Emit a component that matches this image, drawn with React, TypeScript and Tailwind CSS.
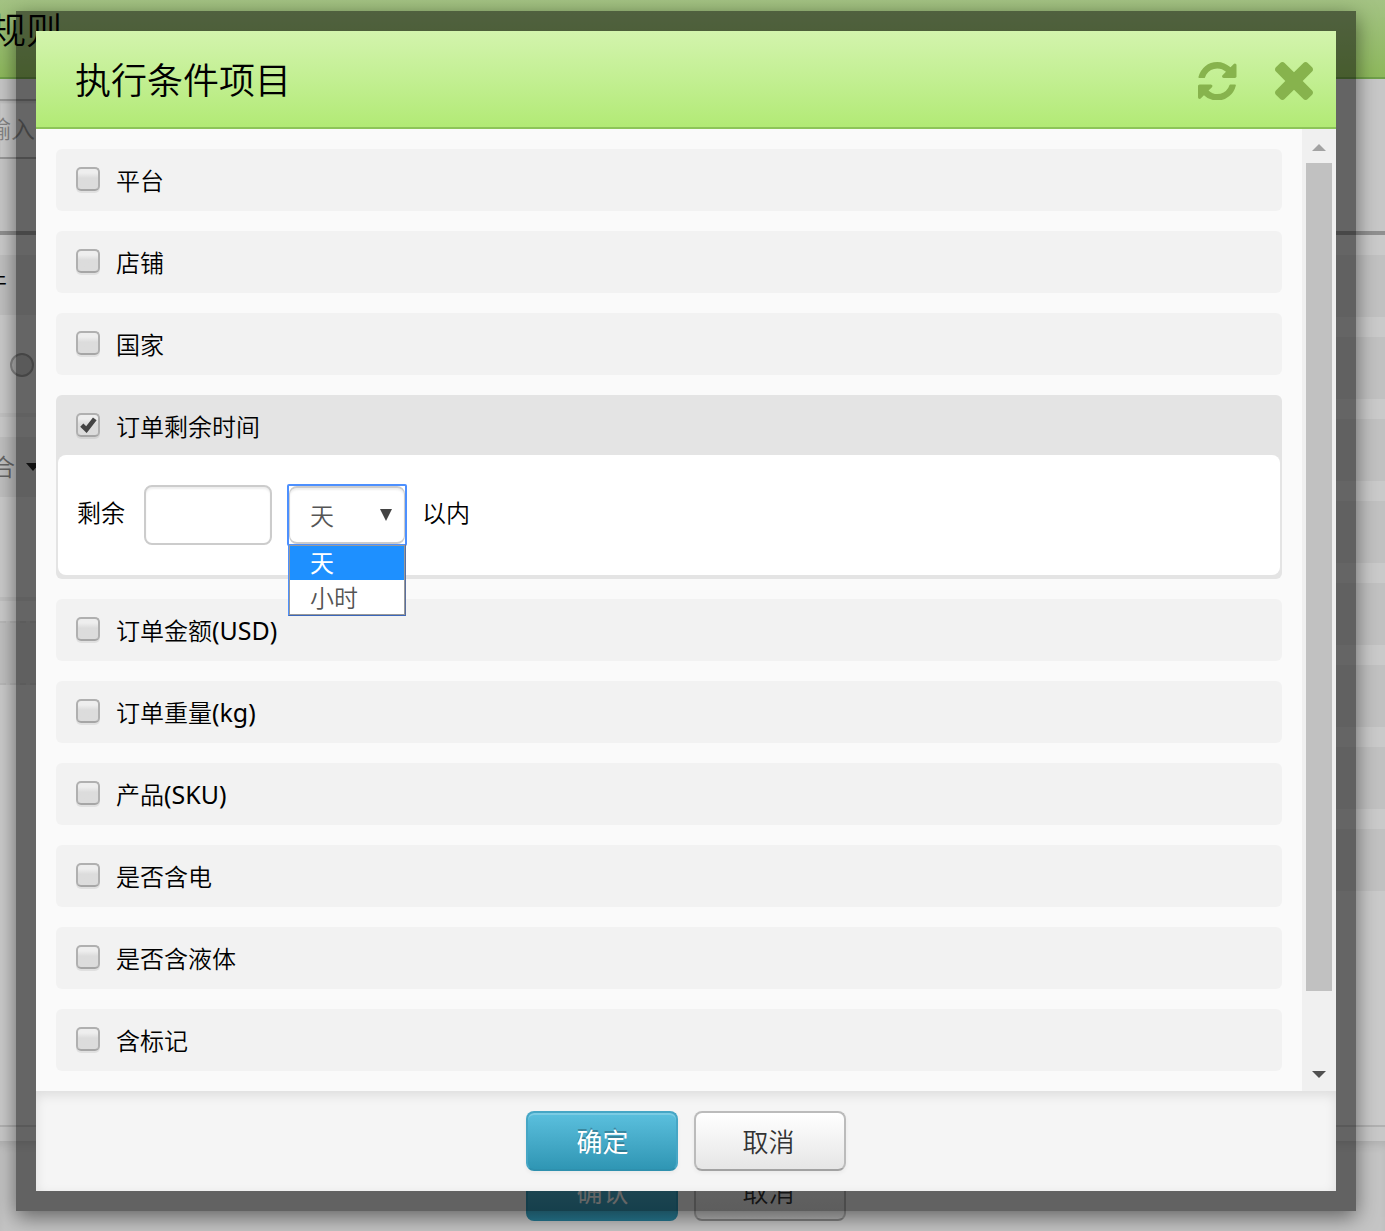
import { useState } from "react"
import clsx from "clsx"

const conditions = [
  { id: "platform", label: "平台" },
  { id: "shop", label: "店铺" },
  { id: "country", label: "国家" },
  { id: "timeLeft", label: "订单剩余时间" },
  { id: "amount", label: "订单金额", suffix: "(USD)" },
  { id: "weight", label: "订单重量", suffix: "(kg)" },
  { id: "sku", label: "产品", suffix: "(SKU)" },
  { id: "battery", label: "是否含电" },
  { id: "liquid", label: "是否含液体" },
  { id: "tag", label: "含标记" },
]

const units = ["天", "小时"]

function RefreshIcon() {
  return (
    <svg viewBox="128 128 1536 1536" className="size-[38.5px]" fill="currentColor">
      <path d="M1639 1056q0 5-1 7-64 268-268 434.5t-478 166.5q-146 0-282.5-55t-243.5-157l-129 129q-19 19-45 19t-45-19-19-45v-448q0-26 19-45t45-19h448q26 0 45 19t19 45-19 45l-137 137q71 66 161 102t187 36q134 0 250-65t186-179q11-17 53-117 8-23 30-23h192q13 0 22.5 9.5t9.5 22.5zm25-800v448q0 26-19 45t-45 19h-448q-26 0-45-19t-19-45 19-45l138-138q-148-137-349-137-134 0-250 65t-186 179q-11 17-53 117-8 23-30 23h-199q-13 0-22.5-9.5t-9.5-22.5v-7q65-268 270-434.5t480-166.5q146 0 284 55.5t245 156.5l130-129q19-19 45-19t45 19 19 45z" />
    </svg>
  )
}

function CloseIcon() {
  return (
    <svg viewBox="302 366 1188 1188" className="size-[38px]" fill="currentColor">
      <path d="M1490 1322q0 40-28 68l-136 136q-28 28-68 28t-68-28l-294-294-294 294q-28 28-68 28t-68-28l-136-136q-28-28-28-68t28-68l294-294-294-294q-28-28-28-68t28-68l136-136q28-28 68-28t68 28l294 294 294-294q28-28 68-28t68 28l136 136q28 28 28 68t-28 68l-294 294 294 294q28 28 28 68z" />
    </svg>
  )
}

function Checkbox({ checked }: { checked: boolean }) {
  return (
    <span className="flex size-6 shrink-0 items-center justify-center rounded-[5px] border-2 border-[#b0b0b0] border-b-[#a6a6a6] bg-linear-to-b from-[#eeeeee] from-20% to-[#dcdcdc] to-45% shadow-[0_2px_0_rgba(0,0,0,0.07)]">
      {checked && (
        <svg viewBox="0 0 17 16" className="h-4 w-[17px] shrink-0" fill="none" stroke="#444" strokeWidth="4.6">
          <path d="M1.8 8.2 6.4 12.6 14.8 1.8" />
        </svg>
      )}
    </span>
  )
}

function Buttons({ confirm, dimmed }: { confirm: string; dimmed?: boolean }) {
  return (
    <div className="flex gap-4 text-[26px] leading-[56px]">
      <button
        className={clsx(
          "h-[60px] w-[152px] rounded-lg border-2 pt-px pl-px font-normal",
          dimmed
            ? "border-[#277b94] bg-linear-to-b from-[#4898b1] to-[#277b94] text-[#cccccc]"
            : "border-[#46a6c5] border-b-[#2e90ae] bg-linear-to-b from-[#5bc0de] to-[#2f96b4] text-white shadow-[inset_0_2px_0_rgba(255,255,255,0.2),0_2px_4px_rgba(0,0,0,0.05)] [text-shadow:0_-2px_0_rgba(0,0,0,0.25)]"
        )}
      >
        {confirm}
      </button>
      <button
        className={clsx(
          "h-[60px] w-[152px] rounded-lg border-2 pt-px pr-[3px]",
          dimmed
            ? "border-[#969696] border-b-[#828282] bg-linear-to-b from-[#cccccc] to-[#b8b8b8] text-[#292929]"
            : "border-[#bbbbbb] border-b-[#a2a2a2] bg-linear-to-b from-white to-[#e6e6e6] text-[#333333] shadow-[0_2px_4px_rgba(0,0,0,0.05)]"
        )}
      >
        取消
      </button>
    </div>
  )
}

function TimeLeftPanel() {
  const [unit, setUnit] = useState("天")

  return (
    <div className="mx-0.5 flex h-[120px] items-center rounded-lg bg-white pl-[19px]">
      <span className="-mt-1 w-[67px]">剩余</span>
      <input className="h-[60px] w-32 rounded-lg border-2 border-[#cccccc] px-3 shadow-[inset_0_2px_2px_rgba(0,0,0,0.07)] outline-none" />
      <div className="relative ml-[15px] h-[62px] w-[120px] rounded-[2px] border-2 border-[#4d90fe] bg-white text-[#555555]">
        <div className="flex h-[58px] items-center justify-between rounded-lg border-x border-y-2 border-[#cccccc] pr-3 pl-5 shadow-[inset_0_2px_2px_rgba(0,0,0,0.07)]">
          <span className="mt-0.5">{unit}</span>
          <svg viewBox="0 0 12 12" className="size-3">
            <path d="M0 0h12L6 12z" fill="#444" />
          </svg>
        </div>
        <ul className="absolute top-[58px] -left-px z-10 w-[118px] border border-[#4d90fe] border-r-[#5a6f9e] border-b-[#3b67bb] bg-white">
          {units.map((u) => (
            <li
              key={u}
              onClick={() => setUnit(u)}
              className={clsx(
                "h-[35px] border-x border-[#999999] pl-5",
                u === unit ? "border-t bg-[#1e90ff] leading-[34px] font-normal text-white" : "border-b leading-[35px]"
              )}
            >
              {u}
            </li>
          ))}
        </ul>
      </div>
      <span className="-mt-1 ml-[15px]">以内</span>
    </div>
  )
}

function RulePage() {
  return (
    <div className="flex h-full flex-col bg-[#cbcbcb]">
      <header className="flex h-[79px] shrink-0 items-start border-b-2 border-[#70a04a] bg-linear-to-b from-[#a4c384] to-[#8eb95c]">
        <h1 className="-ml-[10px] pt-1 text-[36px] leading-[54px]">规则</h1>
      </header>
      <div className="h-[156px] shrink-0 border-b-4 border-[#909090] bg-[#c8c8c8] pt-5">
        <div className="h-[60px] w-[300px] border-y-2 border-[#999999] bg-[#cccccc] leading-[56px] text-[#858585] shadow-[inset_0_2px_2px_rgba(0,0,0,0.07)]">
          <span className="-ml-[13px]">输入条件</span>
        </div>
      </div>
      <div className="flex h-[892px] shrink-0 justify-between border-b-2 border-[#b2b2b2] pt-5">
        <div className="flex w-9 flex-col overflow-hidden">
          <div className="h-[60px] bg-[#c1c1c1] leading-[54px]">
            <span className="-ml-[17px]">件</span>
          </div>
          <div className="h-[102px] border-b-4 border-[#c3c3c3] pt-[38px] pl-[10px]">
            <div className="size-6 rounded-full border-2 border-[#8a8a8a] bg-[#b4b4b4]" />
          </div>
          <div className="mt-5 flex h-[60px] items-center bg-[#c1c1c1] text-[#666666]">
            <span className="-ml-[9px] shrink-0">合</span>
            <svg viewBox="0 0 14 8" className="ml-[11px] h-2 w-3.5 shrink-0">
              <path d="M0 0h14L7 8z" fill="#222" />
            </svg>
          </div>
          <div className="h-[104px] border-b-4 border-[#c1c1c1]" />
          <div className="mt-5 h-16 border-y-2 border-dashed border-[#b9b9b9] bg-[#c1c1c1]" />
        </div>
        <div className="flex w-[60px] flex-col gap-5">
          {Array.from({ length: 8 }, (_, i) => (
            <div key={i} className="h-[62px] bg-[#c2c2c2]" />
          ))}
        </div>
      </div>
      <div className="h-3.5 shrink-0 bg-[#c9c9c9]" />
      <footer className="flex h-[90px] justify-center bg-[#c5c5c5] pt-5 pr-[13px] shadow-[inset_0_8px_10px_-4px_rgba(0,0,0,0.1)]">
        <Buttons confirm="确认" dimmed />
      </footer>
    </div>
  )
}

export default function App() {
  const [selected, setSelected] = useState<string[]>(["timeLeft"])

  const toggle = (id: string) => {
    setSelected((prev) => (prev.includes(id) ? prev.filter((s) => s !== id) : [...prev, id]))
  }

  return (
    <div className="relative h-[1231px] w-[1385px] overflow-hidden font-['Noto_Sans','Noto_Sans_CJK_SC',sans-serif] text-2xl font-[350] text-black">
      <RulePage />

      <div className="absolute top-[11px] left-4 flex h-[1200px] w-[1340px] flex-col border-20 border-black/50 shadow-[0_6px_20px_rgba(0,0,0,0.5)]">
        <header className="flex h-[98px] shrink-0 items-center border-b-2 border-[#8dc459] bg-linear-to-b from-[#d3f4ad] to-[#b2ea75] pr-[23px] pl-[39px]">
          <h2 className="mt-1 flex-1 text-[36px] leading-[54px]">执行条件项目</h2>
          <div className="mt-1 flex items-center gap-[38.5px] text-[#87b34d]">
            <RefreshIcon />
            <CloseIcon />
          </div>
        </header>

        <div className="flex h-[962px] shrink-0 bg-[#fafafa]">
          <div className="flex flex-1 flex-col gap-5 p-5">
            {conditions.map(({ id, label, suffix }) => {
              const checked = selected.includes(id)
              const open = checked && id === "timeLeft"
              return (
                <div
                  key={id}
                  className={clsx("shrink-0 rounded-md", open ? "h-[184px] bg-[#e4e4e4]" : "h-[62px] bg-[#f2f2f2]")}
                >
                  <div className="flex h-[60px] items-center gap-4 px-5" onClick={() => toggle(id)}>
                    <Checkbox checked={checked} />
                    <span className="mt-[3px] flex items-center">
                      {label}
                      {suffix && <span className="-mt-0.5 text-[25px] leading-8 font-normal">{suffix}</span>}
                    </span>
                  </div>
                  {open && <TimeLeftPanel />}
                </div>
              )
            })}
          </div>
          <div className="flex w-[34px] flex-col items-center bg-[#f0f0f0]">
            <svg viewBox="0 0 14 7" className="mt-[15px] h-[7px] w-3.5">
              <path d="M0 7h14L7 0z" fill="#a3a3a3" />
            </svg>
            <div className="mt-3 h-[828px] w-[26px] bg-[#c1c1c1]" />
            <svg viewBox="0 0 14 7" className="mt-20 h-[7px] w-3.5">
              <path d="M0 0h14L7 7z" fill="#505050" />
            </svg>
          </div>
        </div>

        <footer className="flex h-[100px] shrink-0 items-center justify-center bg-[#f5f5f5] shadow-[inset_0_4px_12px_rgba(0,0,0,0.1)]">
          <Buttons confirm="确定" />
        </footer>
      </div>
    </div>
  )
}
